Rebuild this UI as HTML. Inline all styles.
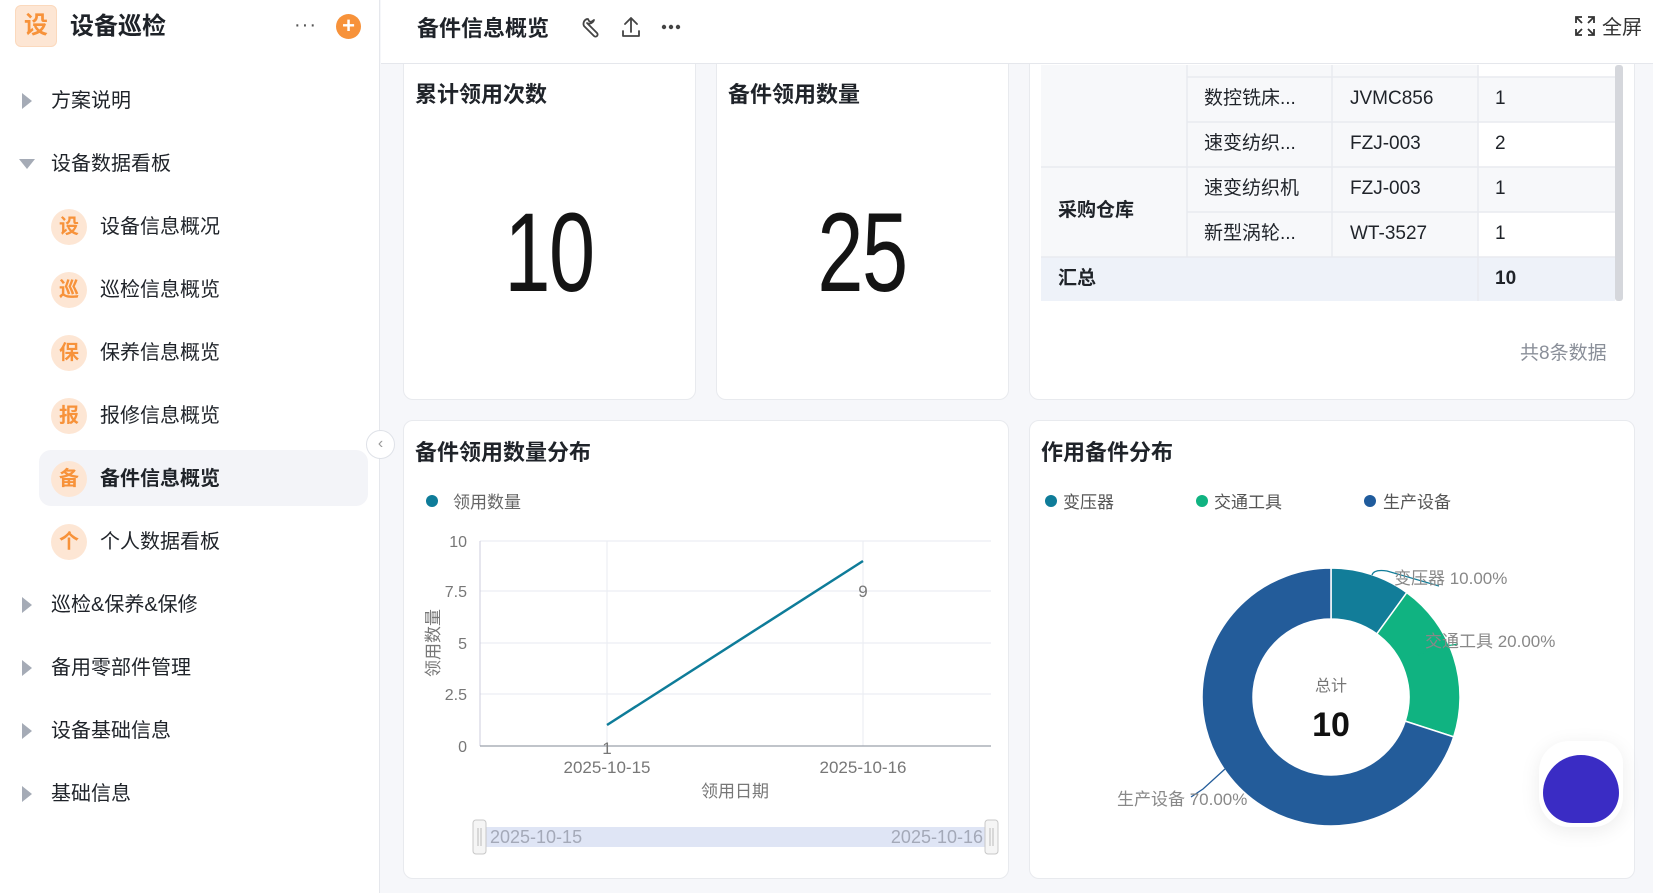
<!DOCTYPE html>
<html><head><meta charset="utf-8"><style>
*{margin:0;padding:0;box-sizing:border-box}
body{width:1653px;height:893px;overflow:hidden;background:#f6f7fa;font-family:"Liberation Sans","Noto Sans CJK SC",sans-serif;color:#1f2329;position:relative}
.abs{position:absolute;white-space:nowrap}
.side{left:0;top:0;width:380px;height:893px;background:#fff;border-right:1px solid #e5e7ec}
.nav{position:absolute;left:51px;font-size:20px;color:#1f2329;line-height:28px;white-space:nowrap}
.arr{position:absolute;left:22px;width:0;height:0;border-top:8px solid transparent;border-bottom:8px solid transparent;border-left:10px solid #a5abb6}
.arrd{position:absolute;left:19px;width:0;height:0;border-left:8px solid transparent;border-right:8px solid transparent;border-top:10px solid #a5abb6}
.ic{position:absolute;left:51px;width:36px;height:36px;border-radius:50%;background:#fde6d4;color:#f7923a;font-weight:bold;font-size:20px;text-align:center;line-height:36px}
.sub{position:absolute;left:100px;font-size:20px;line-height:28px;white-space:nowrap}
.hdr{left:381px;top:0;width:1272px;height:64px;background:#fff;border-bottom:1px solid #e5e7ec}
.card{position:absolute;background:#fff;border:1px solid #e8eaee;border-radius:10px}
.ct{position:absolute;left:11px;font-size:22px;font-weight:bold;white-space:nowrap}
.big{position:absolute;font-size:112px;color:#141414;transform:scaleX(0.74);transform-origin:center;letter-spacing:-2px;width:200px;text-align:center}
.g{color:#8a8f99}
</style></head><body>
<div class="abs side">
  <div class="abs" style="left:15px;top:5px;width:42px;height:42px;border-radius:6px;background:#fde6d4;border:1px solid #fbd9bd;color:#f7923a;font-weight:bold;font-size:24px;text-align:center;line-height:40px">设</div>
  <div class="abs" style="left:70px;top:12px;font-size:24px;font-weight:bold;line-height:30px">设备巡检</div>
  <div class="abs" style="left:294px;top:14px;font-size:20px;color:#555;letter-spacing:1px">···</div>
  <div class="abs" style="left:336px;top:14px;width:25px;height:25px;border-radius:50%;background:#f7923a;color:#fff;font-size:22px;line-height:24px;text-align:center;font-weight:bold">+</div>

  <div class="arr" style="top:93px"></div><div class="nav" style="top:87px">方案说明</div>
  <div class="arrd" style="top:159px"></div><div class="nav" style="top:150px">设备数据看板</div>
  <div class="abs" style="left:39px;top:450px;width:329px;height:56px;border-radius:12px;background:#f3f4f8"></div>
  <div class="ic" style="top:209px">设</div><div class="sub" style="top:213px">设备信息概况</div>
  <div class="ic" style="top:272px">巡</div><div class="sub" style="top:276px">巡检信息概览</div>
  <div class="ic" style="top:335px">保</div><div class="sub" style="top:339px">保养信息概览</div>
  <div class="ic" style="top:398px">报</div><div class="sub" style="top:402px">报修信息概览</div>
  <div class="ic" style="top:461px">备</div><div class="sub" style="top:465px;font-weight:bold">备件信息概览</div>
  <div class="ic" style="top:524px">个</div><div class="sub" style="top:528px">个人数据看板</div>
  <div class="arr" style="top:597px"></div><div class="nav" style="top:591px">巡检&amp;保养&amp;保修</div>
  <div class="arr" style="top:660px"></div><div class="nav" style="top:654px">备用零部件管理</div>
  <div class="arr" style="top:723px"></div><div class="nav" style="top:717px">设备基础信息</div>
  <div class="arr" style="top:786px"></div><div class="nav" style="top:780px">基础信息</div>
</div>
<div class="abs" style="left:366px;top:430px;width:29px;height:29px;border-radius:50%;background:#fff;border:1px solid #dfe2e8;z-index:3;color:#999;text-align:center;line-height:26px;font-size:16px">&lsaquo;</div>

<!-- cards -->
<div class="card" style="left:403px;top:50px;width:293px;height:350px">
  <div class="ct" style="top:26px">累计领用次数</div>
  <div class="big" style="left:45px;top:137px">10</div>
</div>
<div class="card" style="left:716px;top:50px;width:293px;height:350px">
  <div class="ct" style="top:26px">备件领用数量</div>
  <div class="big" style="left:45px;top:137px">25</div>
</div>
<div class="card" style="left:1029px;top:50px;width:606px;height:350px;overflow:hidden">
  <svg class="abs" style="left:0;top:0" width="606" height="350">
    <rect x="11" y="14" width="574" height="236" fill="#f7f8fa"/>
    <rect x="448" y="14" width="137" height="12" fill="#fff"/>
    <rect x="448" y="71" width="137" height="45" fill="#fff"/>
    <rect x="448" y="161" width="137" height="45" fill="#fff"/>
    <rect x="11" y="206" width="574" height="44" fill="#eef2f9"/>
    <g stroke="#e8eaef" stroke-width="1.5" fill="none">
      <line x1="157" y1="14" x2="157" y2="206"/><line x1="302" y1="14" x2="302" y2="206"/><line x1="448" y1="14" x2="448" y2="250"/>
      <line x1="157" y1="26" x2="585" y2="26"/><line x1="157" y1="71" x2="585" y2="71"/><line x1="11" y1="116" x2="585" y2="116"/><line x1="157" y1="161" x2="585" y2="161"/><line x1="11" y1="206" x2="585" y2="206"/>
    </g>
    <rect x="585" y="14" width="8" height="236" rx="3" fill="#d5d7dc"/>
  </svg>
  <div class="abs" style="left:0;top:0;font-size:19px;line-height:24px">
    <div class="abs" style="left:174px;top:36px">数控铣床...</div><div class="abs" style="left:320px;top:36px">JVMC856</div><div class="abs" style="left:465px;top:36px">1</div>
    <div class="abs" style="left:174px;top:81px">速变纺织...</div><div class="abs" style="left:320px;top:81px">FZJ-003</div><div class="abs" style="left:465px;top:81px">2</div>
    <div class="abs" style="left:174px;top:126px">速变纺织机</div><div class="abs" style="left:320px;top:126px">FZJ-003</div><div class="abs" style="left:465px;top:126px">1</div>
    <div class="abs" style="left:174px;top:171px">新型涡轮...</div><div class="abs" style="left:320px;top:171px">WT-3527</div><div class="abs" style="left:465px;top:171px">1</div>
    <div class="abs" style="left:28px;top:148px;font-weight:bold">采购仓库</div>
    <div class="abs" style="left:28px;top:216px;font-weight:bold">汇总</div><div class="abs" style="left:465px;top:216px;font-weight:bold">10</div>
    <div class="abs g" style="left:490px;top:291px;font-size:19px">共8条数据</div>
  </div>
</div>

<div class="card" style="left:403px;top:420px;width:606px;height:459px">
  <div class="ct" style="top:14px">备件领用数量分布</div>
</div>
<svg class="abs" style="left:403px;top:420px" width="606" height="459">
  <circle cx="29" cy="81" r="6" fill="#0e7c99"/>
  <text x="50" y="88" font-size="17" fill="#666">领用数量</text>
  <g stroke="#eceef3" stroke-width="1.2">
    <line x1="77" y1="121" x2="588" y2="121"/><line x1="77" y1="171" x2="588" y2="171"/><line x1="77" y1="223" x2="588" y2="223"/><line x1="77" y1="274" x2="588" y2="274"/>
    <line x1="204" y1="121" x2="204" y2="326"/><line x1="460" y1="121" x2="460" y2="326"/>
  </g>
  <line x1="77" y1="121" x2="77" y2="326" stroke="#ccd" /><line x1="77" y1="326" x2="588" y2="326" stroke="#9aa0ab" stroke-width="1.2"/>
  <g font-size="16" fill="#777" text-anchor="end">
    <text x="64" y="127">10</text><text x="64" y="177">7.5</text><text x="64" y="229">5</text><text x="64" y="280">2.5</text><text x="64" y="332">0</text>
  </g>
  <polyline points="204,305 460,141" fill="none" stroke="#0e7c99" stroke-width="2.5"/>
  <g font-size="17" fill="#777" text-anchor="middle">
    <text x="204" y="334">1</text><text x="460" y="177">9</text>
    <text x="204" y="353">2025-10-15</text><text x="460" y="353">2025-10-16</text>
    <text x="332" y="377">领用日期</text>
    <text transform="translate(30,223) rotate(-90)" x="0" y="6">领用数量</text>
  </g>
  <rect x="76" y="407" width="512" height="20" fill="#dfe5f5"/>
  <rect x="70" y="400" width="13" height="34" rx="3" fill="#f5f5f5" stroke="#c8c8c8"/>
  <rect x="582" y="400" width="13" height="34" rx="3" fill="#f5f5f5" stroke="#c8c8c8"/>
  <g stroke="#bbb"><line x1="75" y1="408" x2="75" y2="426"/><line x1="78" y1="408" x2="78" y2="426"/><line x1="587" y1="408" x2="587" y2="426"/><line x1="590" y1="408" x2="590" y2="426"/></g>
  <text x="87" y="423" font-size="18" fill="#a4a9b8">2025-10-15</text>
  <text x="580" y="423" font-size="18" fill="#a4a9b8" text-anchor="end">2025-10-16</text>
</svg>

<div class="card" style="left:1029px;top:420px;width:606px;height:459px">
  <div class="ct" style="top:14px">作用备件分布</div>
</div>
<svg class="abs" style="left:1029px;top:420px" width="606" height="459">
  <circle cx="22" cy="81" r="6" fill="#0e7c99"/><text x="34" y="88" font-size="17" fill="#555">变压器</text>
  <circle cx="173" cy="81" r="6" fill="#10b381"/><text x="185" y="88" font-size="17" fill="#555">交通工具</text>
  <circle cx="341" cy="81" r="6" fill="#1f5b9c"/><text x="354" y="88" font-size="17" fill="#555">生产设备</text>
  <g transform="translate(302,277)" stroke="#fff" stroke-width="1.5">
    <path d="M0,-129 A129,129 0 0 1 75.8,-104.4 L45.8,-63.1 A78,78 0 0 0 0,-78 Z" fill="#127d99"/>
    <path d="M75.8,-104.4 A129,129 0 0 1 122.7,39.9 L74.2,24.1 A78,78 0 0 0 45.8,-63.1 Z" fill="#10b381"/>
    <path d="M122.7,39.9 A129,129 0 1 1 0,-129 L0,-78 A78,78 0 1 0 74.2,24.1 Z" fill="#235c9a"/>
  </g>
  <g fill="none" stroke-width="1.3">
    <path d="M343,155 q2,-6 15,-4 l52,15" stroke="#127d99"/>
    <path d="M387,236 l18,-8 l24,-4" stroke="#10b381"/>
    <path d="M196,349 l-22,20 l-12,8" stroke="#235c9a"/>
  </g>
  <g font-size="17" fill="#888">
    <text x="365" y="164">变压器 10.00%</text>
    <text x="396" y="227">交通工具 20.00%</text>
    <text x="88" y="385">生产设备 70.00%</text>
  </g>
  <text x="302" y="271" font-size="16" fill="#777" text-anchor="middle">总计</text>
  <text x="302" y="316" font-size="34" font-weight="bold" fill="#111" text-anchor="middle">10</text>
</svg>
<div class="abs" style="left:1539px;top:741px;width:84px;height:86px;border-radius:30px 22px 30px 30px;background:#fff;box-shadow:0 4px 20px rgba(0,0,0,0.08)"></div>
<div class="abs" style="left:1543px;top:755px;width:76px;height:68px;border-radius:38px 38px 30px 30px;background:#3a2cc4"></div>

<div class="abs hdr">
  <div class="abs" style="left:36px;top:14px;font-size:22px;font-weight:bold;line-height:30px">备件信息概览</div>
  <svg class="abs" style="left:198px;top:15px" width="120" height="24" fill="none" stroke="#444" stroke-width="1.8" stroke-linecap="round" stroke-linejoin="round">
    <path d="M8,4 a5,5 0 0 0 -3,7 l10,10 a2,2 0 0 0 3,-3 l-10,-10 a5,5 0 0 0 7,-3 l-3,2 l-2,-1 l-1,-2 z"/>
    <path d="M52,3 v14 M46,9 l6,-6 l6,6 M44,16 v5 h16 v-5"/>
    <circle cx="85" cy="12" r="1.3" fill="#444"/><circle cx="92" cy="12" r="1.3" fill="#444"/><circle cx="99" cy="12" r="1.3" fill="#444"/>
  </svg>
  <svg class="abs" style="left:1194px;top:16px" width="20" height="20" fill="none" stroke="#333" stroke-width="1.8">
    <path d="M1,7 V1 H7 M1,1 l6,6 M13,1 H19 V7 M19,1 l-6,6 M1,13 V19 H7 M1,19 l6,-6 M19,13 V19 H13 M19,19 l-6,-6"/>
  </svg>
  <div class="abs" style="left:1221px;top:14px;font-size:20px;line-height:28px;color:#333">全屏</div>
</div>
</body></html>
